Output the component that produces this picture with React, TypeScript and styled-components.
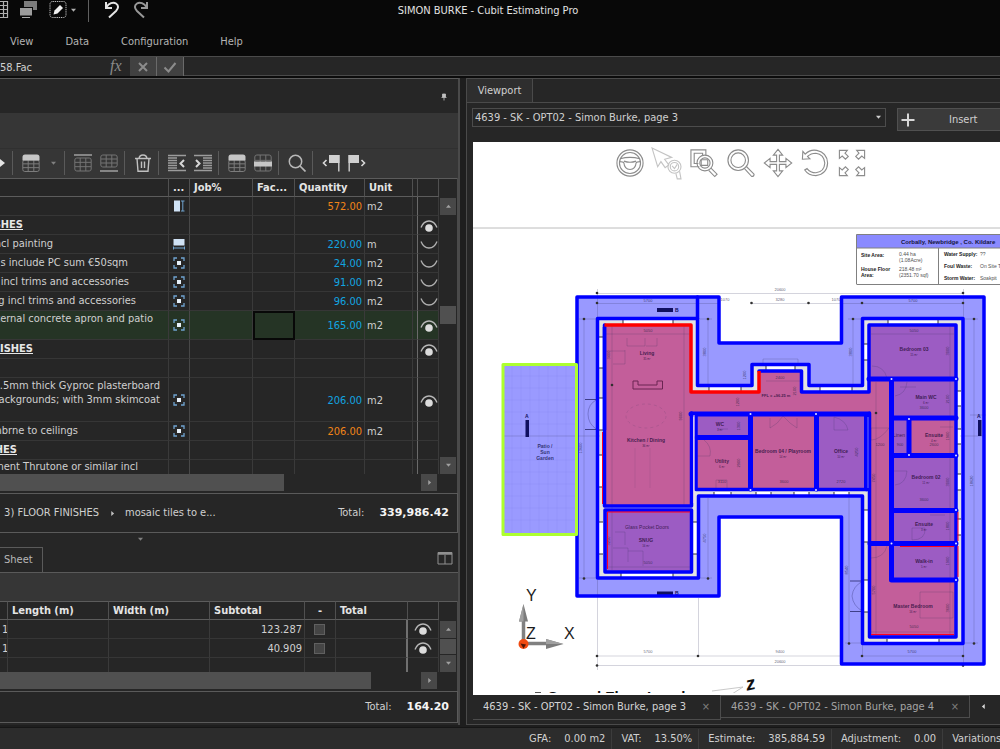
import React from "react";
import styled, { createGlobalStyle, css } from "styled-components";

const Global = createGlobalStyle`
  * { box-sizing: border-box; }
  body { margin: 0; background: #262626; overflow: hidden; }
  body, button, input, select, table {
    font-family: "DejaVu Sans Condensed", "DejaVu Sans", sans-serif;
    font-size: 11px;
    line-height: 14px;
    color: #d0d0d0;
  }
  button { background: none; border: 0; padding: 0; margin: 0; }
  svg { display: block; flex: none; }
`;

/* ---------- frame ---------- */
const Page = styled.div`
  min-height: 100vh;
  display: flex;
  flex-direction: column;
  background: #262626;
  overflow: hidden;
`;
const TitleBar = styled.header`
  display: grid;
  grid-template-columns: 1fr auto 1fr;
  height: 28px;
  padding-right: 24px;
  background: #080808;
`;
const QuickBar = styled.div`
  display: flex;
  align-items: flex-start;
`;
const QuickButton = styled.button<{ $w: number }>`
  display: grid;
  place-items: center;
  width: ${(p) => p.$w}px;
  height: 20px;
`;
const QuickDivider = styled.span`
  width: 1px;
  height: 22px;
  margin: 0 13px 0 12px;
  background: #606060;
`;
const Title = styled.h1`
  margin: 0;
  padding-top: 4px;
  font-size: 11px;
  font-weight: 400;
  color: #e2e2e2;
`;
const Menu = styled.nav`
  display: flex;
  gap: 32px;
  height: 28px;
  padding: 7px 10px 0;
  background: #080808;
`;
const MenuItem = styled.button`
  height: 14px;
  color: #b4b4b4;
`;
const FormulaBar = styled.div`
  display: flex;
  height: 22px;
  border-top: 1px solid #4a4a4a;
  border-bottom: 2px solid #0c0c0c;
`;
const CellName = styled.span`
  width: 105px;
  padding-top: 4px;
`;
const Fx = styled.em`
  width: 25px;
  padding-left: 5px;
  font: italic 16px/18px "Liberation Serif", serif;
  color: #8a8a8a;
`;
const FormulaButton = styled.button`
  display: grid;
  place-items: center;
  width: 27px;
  background: #414141;
  border-right: 1px solid #6a6a6a;
`;
const FormulaInput = styled.input`
  flex: 1;
  min-width: 0;
  border: 0;
  background: #262626;
  border-bottom: 1px solid #4a4a4a;
`;
const Main = styled.main`
  flex: 1;
  display: grid;
  grid-template-columns: 46% 1fr;
  column-gap: 6px;
  background: #1e1e1e;
`;

/* ---------- left side ---------- */
const Left = styled.section`
  display: flex;
  flex-direction: column;
  min-width: 0;
  margin-bottom: 2px;
  background: #262626;
  border-top: 1px solid #5a5a5a;
  border-right: 2px solid #4a4a4a;
`;
const PanelTop = styled.div`
  display: flex;
  justify-content: flex-end;
  align-items: flex-start;
  height: 34px;
  padding: 14px 10px 0 0;
`;
const Band = styled.div<{ $h: number }>`
  height: ${(p) => p.$h}px;
  background: #363636;
`;
const Toolbar = styled.div`
  display: flex;
  align-items: center;
  height: 30px;
  padding-bottom: 1px;
  background: #363636;
  border-top: 1px solid #303030;
`;
const ToolButton = styled.button<{ $w?: number }>`
  display: grid;
  place-items: center;
  width: ${(p) => p.$w ?? 26}px;
  height: 26px;
`;
const Separator = styled.span`
  width: 1px;
  height: 24px;
  margin: 0 5px 0 2px;
  background: #5a5a5a;
`;
const GridArea = styled.div`
  display: flex;
  border-right: 1px solid #4a4a4a;
`;
const Table = styled.table`
  flex: 1;
  width: 0;
  table-layout: fixed;
  border-collapse: separate;
  border-spacing: 0;
`;
const Row = styled.tr<{ $h?: number; $selected?: boolean }>`
  height: ${(p) => p.$h ?? 19}px;
  background: ${(p) => (p.$selected ? "#253425" : "transparent")};
`;
const Head = styled.th<{ $center?: boolean }>`
  height: 19px;
  padding: ${(p) => (p.$center ? "0" : "0 0 0 4px")};
  overflow: hidden;
  white-space: nowrap;
  text-align: ${(p) => (p.$center ? "center" : "left")};
  font-weight: 700;
  color: #e4e4e4;
  border-top: 1px solid #5c5c5c;
  border-right: 1px solid #505050;
  border-bottom: 1px solid #5c5c5c;
`;
const Cell = styled.td<{ $tone?: string; $num?: boolean; $edge?: string; $thick?: boolean; $focus?: boolean; $last?: boolean }>`
  padding: 2px 2px 0;
  overflow: hidden;
  white-space: nowrap;
  color: ${(p) => p.$tone ?? "#d0d0d0"};
  text-align: ${(p) => (p.$num ? "right" : "left")};
  border-right: ${(p) => (p.$thick ? 2 : 1)}px solid ${(p) => p.$edge ?? "#3a3a3a"};
  border-bottom: ${(p) => (p.$last ? "0" : "1px solid #363636")};
  ${(p) =>
    p.$focus &&
    css`
      outline: 2px solid #080808;
      outline-offset: -2px;
    `}
  > svg, > button, > input { margin: 0 auto; display: block; }
`;
const IconCell = styled(Cell)`
  padding: 0 1px 0 0;
`;
const DescCell = styled(Cell)<{ $top?: boolean }>`
  padding: ${(p) => (p.$top ? "1px 0 0" : "0")};
  vertical-align: ${(p) => (p.$top ? "top" : "middle")};
`;
const Desc = styled.span<{ $end: number; $heading?: boolean }>`
  display: flex;
  justify-content: flex-end;
  width: ${(p) => p.$end}px;
  ${(p) =>
    p.$heading &&
    css`
      font-weight: 700;
      text-decoration: underline;
      color: #e6e6e6;
    `}
`;
const VScroll = styled.div`
  display: flex;
  flex-direction: column;
  align-items: center;
  width: 18px;
`;
const ScrollHead = styled.div`
  width: 100%;
  height: 19px;
  border-top: 1px solid #5c5c5c;
`;
const ScrollTrack = styled.div`
  flex: 1;
  width: 16px;
  display: flex;
  flex-direction: column;
  padding-top: 1px;
`;
const ScrollButton = styled.button`
  display: grid;
  place-items: center;
  flex: none;
  width: 16px;
  height: 17px;
  background: #484848;
`;
const VThumb = styled.div<{ $before: string; $size: string }>`
  flex: 0 0 ${(p) => p.$size};
  margin-top: ${(p) => p.$before};
  background: #505050;
`;
const Spring = styled.span`
  flex: 1;
`;
const HScroll = styled.div`
  display: flex;
  height: 19px;
  padding: 0 20px 2px 0;
  border-right: 1px solid #4a4a4a;
`;
const HThumb = styled.div<{ $w: string }>`
  width: ${(p) => p.$w};
  background: #505050;
`;
const Summary = styled.div<{ $h: number }>`
  display: flex;
  align-items: center;
  height: ${(p) => p.$h}px;
  padding-right: 8px;
  border: solid #5a5a5a;
  border-width: 1px 1px 1px 0;
`;
const Crumb = styled.button<{ $end?: number }>`
  display: flex;
  justify-content: flex-end;
  white-space: nowrap;
  width: ${(p) => (p.$end ? p.$end + "px" : "auto")};
`;
const CrumbArrow = styled.span`
  display: grid;
  place-items: center;
  width: 26px;
`;
const TotalValue = styled.strong`
  padding-left: 15px;
  font-family: "DejaVu Sans", sans-serif;
  color: #f4f4f4;
`;
const Splitter = styled.div`
  display: flex;
  height: 14px;
  padding: 4px 0 0 138px;
`;
const SheetTabs = styled.div`
  display: flex;
  justify-content: space-between;
  height: 26px;
  padding-right: 4px;
  border-bottom: 1px solid #5a5a5a;
`;
const SheetTab = styled.button`
  width: 43px;
  text-align: left;
  padding-left: 4px;
  color: #b8b8b8;
  border-top: 1px solid #5a5a5a;
  border-right: 1px solid #5a5a5a;
`;
const LayoutButton = styled.button`
  display: grid;
  place-items: center;
  width: 18px;
  height: 22px;
`;
const Tick = styled.input`
  appearance: none;
  width: 11px;
  height: 11px;
  background: #454545;
  border: 1px solid #606060;
`;

/* ---------- right side ---------- */
const Right = styled.section`
  display: flex;
  flex-direction: column;
  min-width: 0;
  margin-bottom: 2px;
  background: #262626;
  border: solid #4a4a4a;
  border-width: 1px 0 1px 1px;
`;
const ViewTabs = styled.div`
  display: flex;
  height: 24px;
  border-bottom: 1px solid #4a4a4a;
`;
const ViewTab = styled.button`
  width: 66px;
  background: #2e2e2e;
  border-right: 1px solid #4a4a4a;
`;
const ViewBar = styled.div`
  display: flex;
  gap: 11px;
  height: 39px;
  padding: 5px 0 0 5px;
`;
const SelectWrap = styled.label`
  position: relative;
  flex: 1;
  height: 19px;
`;
const Select = styled.select`
  appearance: none;
  width: 100%;
  height: 19px;
  padding: 0 2px;
  background: #262626;
  border: 1px solid #4c4c4c;
  border-radius: 0;
`;
const SelectCaret = styled.span`
  position: absolute;
  right: 5px;
  top: 7px;
  pointer-events: none;
`;
const InsertButton = styled.button`
  display: flex;
  align-items: center;
  gap: 34px;
  width: 103px;
  height: 23px;
  padding-left: 3px;
  background: #3a3a3a;
  border: solid #505050;
  border-width: 1px 0 1px 1px;
`;
const Canvas = styled.div`
  position: relative;
  flex: 1;
  margin-left: 6px;
  background: #fff;
  overflow: hidden;
`;
const Plan = styled.svg`
  width: 100%;
  height: auto;
`;
const NavTools = styled.div`
  position: absolute;
  inset: 3px 0 auto 9px;
  display: flex;
  justify-content: center;
`;
const NavButton = styled.button`
  display: grid;
  place-items: center;
  width: 37px;
  height: 36px;
`;
const PageTabs = styled.div`
  display: flex;
  height: 29px;
  padding-left: 6px;
  overflow: hidden;
`;
const PageTab = styled.button<{ $active?: boolean }>`
  display: flex;
  align-items: center;
  justify-content: space-between;
  flex: none;
  width: ${(p) => (p.$active ? 248 : 249)}px;
  height: ${(p) => (p.$active ? 25 : 23)}px;
  padding: 0 10px;
  white-space: nowrap;
  color: ${(p) => (p.$active ? "#d4d4d4" : "#a4a4a4")};
  border: solid #4c4c4c;
  border-width: ${(p) => (p.$active ? "0 1px 1px 0" : "1px 1px 1px 0")};
`;
const TabClose = styled.span`
  color: #808080;
`;
const TabNext = styled.button`
  display: grid;
  place-items: center;
  width: 26px;
  height: 23px;
`;
const Status = styled.footer`
  display: flex;
  align-items: center;
  height: 22px;
  padding-left: 52%;
  background: #2c2c2c;
  border-top: 1px solid #161616;
  overflow: hidden;
`;
const StatusItem = styled.span`
  display: flex;
  flex: none;
  gap: 13px;
  padding: 0 6px 0 9px;
  height: 20px;
  align-items: center;
  border-right: 1px solid #3c3c3c;
`;

/* ---------- small drawings ---------- */
const Caret = ({ dir = "down", color = "#a0a0a0", size = 5 }: { dir?: string; color?: string; size?: number }) => {
  const d: Record<string, string> = {
    down: "M0 1H6L3 4.5Z",
    up: "M0 4.5H6L3 1Z",
    right: "M1.5 0V6L5 3Z",
    left: "M4.5 0V6L1 3Z",
  };
  return (
    <svg width={size} height={size} viewBox="0 0 6 6">
      <path d={d[dir]} fill={color} />
    </svg>
  );
};
const I = ({ w = 18, h = 18, children }: { w?: number; h?: number; children: React.ReactNode }) => (
  <svg width={w} height={h} viewBox={`0 0 ${w} ${h}`} fill="none">
    {children}
  </svg>
);
const GridBody = ({ y = 6, h = 11.5, c = "#7c7c7c" }) => (
  <g stroke={c}>
    <rect x=".8" y={y} width="16.4" height={h} rx="2" />
    <path d={`M6.2 ${y}v${h}M11.8 ${y}v${h}M1 ${y + h / 3}h16M1 ${y + (2 * h) / 3}h16`} />
  </g>
);
const HeadTable = () => (
  <I>
    <GridBody />
    <path d="M.5 6.5V3q0-2.5 2.5-2.5h12q2.500 0 2.500 2.500v3.500z" fill="#c6c6c6" />
  </I>
);
const RowAbove = () => (
  <I>
    <path d="M0 1h18" stroke="#a8a8a8" strokeWidth="1.400" />
    <GridBody y={4} h={13} c="#747474" />
  </I>
);
const RowBelow = () => (
  <I>
    <GridBody y={1} h={12} c="#747474" />
    <path d="M0 17h18" stroke="#a8a8a8" strokeWidth="1.400" />
  </I>
);
const RowMid = () => (
  <I>
    <GridBody y={1} h={16} c="#747474" />
    <rect y="7.500" width="18" height="5" fill="#c6c6c6" />
  </I>
);
const Trash = () => (
  <I>
    <g stroke="#c0c0c0" strokeWidth="1.400">
      <path d="M1 4.500h16M3 4.500l1 12.800h10l1-12.800M5 4.500Q5.500 1 9 1t4 3.500M7.500 7.500v6.500M10.500 7.500v6.500" />
    </g>
  </I>
);
const Outdent = () => (
  <I>
    <path d="M0 1.500h18M0 4h9M0 6.500h9M0 9h9M0 11.500h9M0 14h9M0 16.500h18" stroke="#9c9c9c" strokeWidth="1.300" />
    <path d="M16 6l-3.500 3.500L16 13" stroke="#d8d8d8" strokeWidth="2" />
  </I>
);
const Indent = () => (
  <I>
    <path d="M0 1.500h18M9 4h9M9 6.500h9M9 9h9M9 11.500h9M9 14h9M0 16.500h18" stroke="#9c9c9c" strokeWidth="1.300" />
    <path d="M2 6l3.500 3.500L2 13" stroke="#d8d8d8" strokeWidth="2" />
  </I>
);
const Search = () => (
  <I>
    <circle cx="7.500" cy="7.500" r="6.200" stroke="#b8b8b8" strokeWidth="1.500" />
    <path d="M12 12l5.500 5.500" stroke="#b8b8b8" strokeWidth="1.700" />
  </I>
);
const FlagPrev = () => (
  <I>
    <path d="M7 1h10.500v8h-10.500z" fill="#d0d0d0" />
    <path d="M16.800 1v16.500" stroke="#d0d0d0" strokeWidth="1.400" />
    <path d="M4.500 6L1.500 9l3 3" stroke="#d8d8d8" strokeWidth="1.600" />
  </I>
);
const FlagNext = () => (
  <I>
    <path d="M.5 1h10.500v8h-10.500z" fill="#d0d0d0" />
    <path d="M1.200 1v16.500" stroke="#d0d0d0" strokeWidth="1.400" />
    <path d="M13.500 6l3 3-3 3" stroke="#d8d8d8" strokeWidth="1.600" />
  </I>
);
const QuickIcons = () => (
  <>
    <QuickButton $w={12} aria-label="Worksheet">
      <I w={12} h={20}>
        <path d="M-2 1.500H7.500V17.500H-2M3.500 1.500V17.500M0 5.500H7.500M0 9.500H7.500M0 13.500H7.500" stroke="#b0b0b0" strokeWidth="1.200" />
      </I>
    </QuickButton>
    <QuickButton $w={34} aria-label="Windows">
      <I w={20} h={20}>
        <rect x="5" y="1" width="13" height="9" fill="#7c7c7c" />
        <rect x=".5" y="7.500" width="13" height="8.500" fill="#9c9c9c" stroke="#080808" />
        <path d="M3 17.500h8" stroke="#aaa" />
      </I>
    </QuickButton>
    <QuickButton $w={24} aria-label="Edit">
      <I w={18} h={20}>
        <rect x="1" y="1.500" width="16" height="16" rx="2.500" stroke="#b8b8b8" strokeDasharray="1.400 .8" />
        <path d="M4.500 14.500l1-4L11 5l3 3L8.500 13.500z" fill="#f0f0f0" />
      </I>
    </QuickButton>
    <QuickButton $w={6} aria-label="Edit options">
      <Caret color="#b0b0b0" />
    </QuickButton>
    <QuickDivider />
    <QuickButton $w={20} aria-label="Undo">
      <I w={16} h={20}>
        <path d="M2 2v6h6M2.500 7C5 3.500 9 1.500 12 3.500c3 2 2.500 5 0 7.500L5 17.500" stroke="#e4e4e4" strokeWidth="2" />
      </I>
    </QuickButton>
    <QuickButton $w={38} aria-label="Redo">
      <I w={16} h={20}>
        <path d="M14 2v6H8M13.500 7C11 3.500 7 1.500 4 3.500c-3 2-2.500 5 0 7.500l7 6.500" stroke="#989898" strokeWidth="2" />
      </I>
    </QuickButton>
  </>
);

const AreaMark = () => (
  <I w={12} h={12}>
    <path d="M1 4V1h3M8 1h3v3M11 8v3H8M4 11H1V8" stroke="#6fa3cf" strokeWidth="1.300" />
    <rect x="4" y="4" width="4" height="4" fill="#e6f0fa" />
  </I>
);
const HeightMark = () => (
  <I w={12} h={12}>
    <rect x="1" y=".5" width="6" height="11" fill="#cfe2f5" />
    <path d="M8 1h3.500M8 11h3.500M9.800 1v10" stroke="#6fa3cf" />
  </I>
);
const LengthMark = () => (
  <I w={12} h={12}>
    <rect x=".5" y="1" width="11" height="6.500" fill="#cfe2f5" />
    <path d="M.5 8.500v3M11.500 8.500v3M.5 10h11" stroke="#6fa3cf" />
  </I>
);
const EyeOpen = () => (
  <I w={18} h={12}>
    <path d="M1 7.500C3 2.500 6 1 9 1s6 1.500 8 6.500" stroke="#b8b8b8" strokeWidth="1.300" />
    <circle cx="9" cy="8" r="3.800" fill="#dcdcdc" />
  </I>
);
const EyeShut = () => (
  <I w={18} h={12}>
    <path d="M1 2.500C3 7.500 6 9 9 9s6-1.500 8-6.500" stroke="#b0b0b0" strokeWidth="1.300" />
  </I>
);

/* ---------- data ---------- */
type Item = {
  desc: string[];
  end: number;
  heading?: boolean;
  mark?: "area" | "height" | "length";
  qty?: string;
  unit?: string;
  warm?: boolean;
  eye?: "open" | "shut";
  h?: number;
  selected?: boolean;
};
const items: Item[] = [
  { desc: [], end: 0, mark: "height", qty: "572.00", unit: "m2", warm: true },
  { desc: ["SHES"], end: 23, heading: true, eye: "open" },
  { desc: ["ncl painting"], end: 53, mark: "length", qty: "220.00", unit: "m", eye: "shut" },
  { desc: ["s include PC sum €50sqm"], end: 128, mark: "area", qty: "24.00", unit: "m2", eye: "shut" },
  { desc: ["incl trims and accessories"], end: 129, mark: "area", qty: "91.00", unit: "m2", eye: "shut" },
  { desc: ["ng incl trims and accessories"], end: 136, mark: "area", qty: "96.00", unit: "m2", eye: "shut" },
  { desc: ["ternal concrete apron and patio"], end: 153, mark: "area", qty: "165.00", unit: "m2", eye: "open", h: 29, selected: true },
  { desc: ["ISHES"], end: 33, heading: true, eye: "open" },
  { desc: [], end: 0 },
  { desc: [".5mm thick Gyproc plasterboard", "ackgrounds; with 3mm skimcoat"], end: 160, mark: "area", qty: "206.00", unit: "m2", eye: "open", h: 44 },
  { desc: ["nbrne to ceilings"], end: 78, mark: "area", qty: "206.00", unit: "m2", warm: true },
  { desc: ["HES"], end: 17, heading: true },
  { desc: ["nent Thrutone or similar incl"], end: 138, h: 14 },
];
const marks = { area: <AreaMark />, height: <HeightMark />, length: <LengthMark /> };

/* ---------- floor plan ---------- */
const apron =
  "M577 297H719V343H841.500V297H984V664H841.500V517H719V596H577Z";
const shell =
  "M597.500 318.500H697.500V385.500H752V364.500H809V385.500H862.500V318.500H963V643.500H862.500V496H698.500V578H597.500Z";
const floor =
  "M604.500 325H691V392H759V371H801.500V392H869V325H956V637H869V413H691.500V506H604.500Z";
const pink = "#c35e9a";
const violet = "#9c5cc3";
const rooms: [number, number, number, number, string][] = [
  [869, 325, 87, 53, violet],
  [893, 380, 63, 37, violet],
  [893, 419, 15, 35, violet],
  [909, 419, 47, 35, pink],
  [893, 456, 63, 54, violet],
  [893, 511, 63, 32, violet],
  [893, 545, 63, 34, violet],
  [697, 415, 53, 21, violet],
  [696, 439, 54, 51, pink],
  [751, 415, 65, 74, pink],
  [817, 415, 48, 74, violet],
];
const walls = [
  "M691 414H868", "M750.500 414V489", "M816.500 414V489", "M697 437.500H750", "M866.500 414V489",
  "M869 379H956", "M891.500 379V580H956", "M891.500 418H956", "M909 418V455", "M891.500 455.500H956",
  "M891.500 510.500H956", "M870 543.500H956",
];
const windows: [number, number, number, number][] = [
  [623, 320, 50, 4], [888, 320, 50, 4], [709, 387, 32, 4], [820, 387, 32, 4], [766, 366, 29, 4],
  [599, 337, 4, 31], [599, 398, 4, 32], [599, 455, 4, 32], [599, 522, 4, 32], [693, 522, 4, 32],
  [621, 573, 52, 4], [714, 492, 17, 3], [756, 492, 15, 3], [794, 492, 15, 3], [834, 492, 15, 3],
  [864, 344, 4, 16], [957, 391, 4, 15], [957, 429, 4, 15], [957, 474, 4, 16], [957, 519, 4, 16],
  [864, 510, 4, 32], [864, 580, 4, 32], [887, 639, 52, 3],
];
const roomNames: [number, number, string, string][] = [
  [647, 355, "Living", "35 m²"],
  [646, 442, "Kitchen / Dining", "36 m²"],
  [646, 542, "SNUG", "16 m²"],
  [914, 351, "Bedroom 03", "15 m²"],
  [926, 399, "Main WC", "6 m²"],
  [934, 437, "Ensuite", "4 m²"],
  [926, 479, "Bedroom 02", "11 m²"],
  [924, 526, "Ensuite", "3 m²"],
  [924, 563, "Walk-in", "5 m²"],
  [913, 608, "Master Bedroom", "16 m²"],
  [720, 426, "WC", "3 m²"],
  [722, 463, "Utility", "6 m²"],
  [783, 453, "Bedroom 04 / Playroom", "14 m²"],
  [841, 453, "Office", "10 m²"],
];
const dims: [number, number, string, boolean?][] = [
  [780, 291, "20600"], [780, 301, "3280"], [725, 301, "1070"], [836, 301, "1070"], [648, 302, "5700"], [913, 302, "5700"],
  [648, 332, "5050"], [914, 332, "5050"], [780, 379, "2400"], [648, 564, "5050"], [648, 653, "5700"], [780, 653, "9400"],
  [780, 663, "20600"], [912, 653, "5700"], [914, 628, "5050"], [722, 483, "3110"], [784, 483, "3600"], [841, 483, "2720"],
  [924, 409, "3600"], [924, 501, "3600"], [900, 446, "900"], [934, 446, "2600"], [880, 446, "1200"],
  [706, 352, "3800", true], [852, 352, "3800", true], [610, 355, "3400", true], [682, 416, "9000", true], [746, 375, "1200", true],
  [796, 391, "2100", true], [739, 402, "1200", true], [949, 351, "3000", true], [949, 399, "2100", true], [949, 436, "1900", true],
  [949, 482, "3000", true], [949, 526, "1800", true], [949, 561, "1900", true], [949, 608, "3600", true], [740, 463, "2900", true],
  [858, 452, "4250", true], [706, 538, "4750", true], [848, 570, "8540", true], [610, 541, "3250", true], [582, 448, "13600", true],
  [973, 481, "18620", true], [875, 478, "7450", true], [875, 590, "5700", true], [740, 426, "1300", true],
];
const dots: [number, number][] = [
  [597, 293], [963, 293], [597, 303], [751.5, 303], [808.5, 303], [862, 303], [963, 303], [584, 319], [708, 319],
  [853, 319], [974, 319], [584, 578.5], [708, 578.5], [849, 643.5], [974, 643.5], [597, 656], [698, 656], [862, 656],
  [963, 656], [597, 665.5], [963, 665.5], [612, 385], [876, 413],
];
const joints: [number, number][] = [
  [750.5, 414], [816, 414], [891.5, 379], [956, 379], [909, 419], [956, 455.5], [909, 455], [956, 510],
  [891.5, 543.5], [956, 543.5], [956, 580], [750.5, 490], [816, 490],
];

const FloorPlan = () => (
  <Plan viewBox="473 142 527 551" fontFamily='"Liberation Sans", sans-serif' fill="none">
    <rect x="473" y="142" width="527" height="552" fill="#fff" />
    <path d="M473 228H1000" stroke="#bcbcbc" />

    <rect x="856.500" y="234.500" width="160" height="13.500" fill="#8a8aff" />
    <path d="M856.500 284V234.500H1000M856.500 248H1000M856.500 284.500H1000M938.500 248V284" stroke="#808080" />
    <g fill="#222" fontSize="5">
      <text x="901" y="244" fontSize="6" fontWeight="700" fill="#141440">Corbally, Newbridge , Co. Kildare</text>
      <g fontWeight="700">
        <text x="861" y="257">Site Area:</text>
        <text x="861" y="271">House Floor</text>
        <text x="861" y="277">Area:</text>
        <text x="944" y="256">Water Supply:</text>
        <text x="944" y="268">Foul Waste:</text>
        <text x="944" y="280">Storm Water:</text>
      </g>
      <g fill="#505050">
        <text x="899" y="256">0.44 ha</text>
        <text x="899" y="262">(1.08Acre)</text>
        <text x="899" y="271">218.48 m²</text>
        <text x="899" y="277">(2351.70 sqf)</text>
        <text x="980" y="256">??</text>
        <text x="980" y="268">On Site T</text>
        <text x="980" y="280">Soakpit</text>
      </g>
    </g>

    <path d={apron} fill="#9999ff" />
    <path d={shell} fill="#e2e2e2" />
    {windows.map(([x, y, w, h], i) => (
      <g key={i}>
        <rect x={x} y={y} width={w} height={h} fill="#fff" />
        <path d={w > h ? `M${x} ${y}v${h}M${x + w} ${y}v${h}` : `M${x} ${y}h${w}M${x} ${y + h}h${w}`} stroke="#333" />
      </g>
    ))}
    <path d={floor} fill={pink} />
    <rect x="605" y="510" width="87" height="61" fill={violet} />
    {rooms.map(([x, y, w, h, fill], i) => (
      <rect key={i} x={x} y={y} width={w} height={h} fill={fill} />
    ))}
    <rect x="503" y="364.500" width="73.500" height="170" fill="#9a9aff" />
    <path
      d="M512 366V533M521 366V533M530 366V533M539 366V533M548 366V533M557 366V533M566 366V533M504 376H576M504 388H576M504 400H576M504 412H576M504 424H576M504 448H576M504 460H576M504 472H576M504 484H576M504 496H576M504 508H576M504 520H576"
      stroke="#8e8ef4" strokeWidth=".5"
    />

    {/* dimension lines and fittings */}
    <g stroke="#30305a" strokeOpacity=".3" strokeWidth=".7">
      <path d="M597 293.500H963M597 303.500H720M751 303.500H963M597.500 289V318M963.500 289V318M597.500 580V670M698.500 598V656M862.500 645V656M963.500 645V667M597 656H841M597 665.500H841M862 656H963" />
      <path d="M584 319V578M708 319V385M853 319V385M974 319V643M708 498V578M849 496V643M579 319H600M700 319H712M848 319H862M963 319H978M579 578H597M698 578H712M845 643H862M963 643H978" />
      <path d="M605 334H690M871 334H954M605 567H690M871 632H954M612 326V570M876 382V636M684 326V505M950 327V635M766 381H800M763 359H798V364M763 359V364" />
      <path d="M613 364H625V350M627 338V346H645V338M646 346H657V338M606 351H625M502 436H600M770 428V418M797 428V418M770 428Q778 424 783 416Q790 424 797 428M834 430V417Q846 420 848 430H834M872 366Q884 366 887 378M895 396Q906 394 907 382M871 428H889M871 428V440Q880 440 889 428M893 471H907Q906 484 895 485M912 540V528H925Q926 540 912 540M871 558Q884 558 887 546M697 456H710Q712 446 704 440" />
      <ellipse cx="646" cy="416" rx="20" ry="12" strokeDasharray="3 3" strokeOpacity=".2" />
      <path d="M635 448V488M650 448V488" strokeOpacity=".15" />
      <path d="M613 548H628V562M628 551H643V566M615 532H625V545M716 488V480H727V488M920 592H953V618H920Z" />
      <path d="M970 415H986M960 436H984M718 429H728M900 387H916M930 515H945M940 427H953" />
    </g>
    <g stroke="#28286a" strokeWidth=".8">
      <path d="M585 399.500H597M585 429.500H597M850 581H863M850 611.500H863" />
      <path d="M597 399.500Q588 404 588 414Q588 424 597 429.500M863 581Q853 586 852 596Q853 606 863 611.500" strokeOpacity=".4" />
    </g>
    <path d="M633 381V389H662.500V381H657V385H638V381Z" stroke="#6a2452" />
    <g fill="#101060">
      <rect x="657" y="308" width="16" height="4" />
      <rect x="657" y="591.500" width="16" height="3.500" />
      <rect x="525.500" y="420" width="3.500" height="17" />
      <rect x="978" y="420" width="3.500" height="16" />
      <g fontSize="5" fontWeight="700">
        <text x="675" y="312">B</text>
        <text x="675" y="595">B</text>
        <text x="525" y="418">A</text>
        <text x="977" y="418">A</text>
      </g>
    </g>
    <g fill="#303030">
      {dots.map(([x, y], i) => (
        <circle key={i} cx={x} cy={y} r="1.300" />
      ))}
    </g>
    <g textAnchor="middle" fontSize="4" fill="#20203c" fillOpacity=".75">
      {dims.map(([x, y, t, vertical], i) => (
        <text key={i} x={x} y={y} transform={vertical ? `rotate(-90 ${x} ${y})` : undefined}>{t}</text>
      ))}
    </g>
    <g textAnchor="middle" fontSize="5" fill="#2e1040" fillOpacity=".85">
      {roomNames.map(([x, y, name, size], i) => (
        <g key={i}>
          <text x={x} y={y} fontWeight="700">{name}</text>
          <text x={x} y={y + 5} fontSize="3">{size}</text>
        </g>
      ))}
      <text x="899" y="437">Linen</text>
      <text x="647" y="529">Glass Pocket Doors</text>
      <text x="776" y="397" fontSize="4" fontWeight="700">FFL = +96.25 m</text>
      <g fontWeight="700" fill="#1c1c5a">
        <text x="545" y="448">Patio /</text>
        <text x="545" y="454">Sun</text>
        <text x="545" y="460">Garden</text>
      </g>
    </g>

    {/* measured outlines */}
    <g stroke="#0000ff" strokeWidth="3.500" strokeLinejoin="round" strokeLinecap="round">
      <path d={apron} />
      <path d={shell} />
      <path d="M697.500 297V318.500" />
      <path d="M759 371H801.500V392H869V325H956V637H869.500V413M691.500 413V506H604.500V325" />
      <path d="M605 510H691.500V572H605Z" />
      <path d="M696 415V489.500H865" />
      <path d={walls.join("")} strokeWidth="5" />
    </g>
    <path d="M868 417V488" stroke="#8c8cf0" strokeWidth=".8" />
    <path d="M694 415V503" stroke="#f4d8ee" strokeWidth="1" />
    <path d="M607.500 569V512H690M602.500 432V504M958 512V541M958 546V577M900 546.500H954M871 634.500H954" stroke="#ff0020" />
    <path d="M604.500 325H691V392H759V371" stroke="#ff0000" strokeWidth="3.500" strokeLinejoin="round" />
    <path d="M604.500 327V430" stroke="#0000ff" strokeWidth="3.500" />
    <g fill="#e8e8ff">
      {joints.map(([x, y], i) => (
        <circle key={i} cx={x} cy={y} r="1" />
      ))}
    </g>
    <rect x="503" y="364.500" width="73.500" height="170" stroke="#adff2f" strokeWidth="3" strokeLinejoin="round" />

    {/* axis marker */}
    <path d="M523.500 643V618M523.500 643.500H548" stroke="#808080" strokeWidth="3.500" />
    <path d="M523.500 604L528 621.500H519ZM563.500 644L546 639V649Z" fill="#7c7c7c" />
    <path d="M523.500 604V621.500H519ZM563.500 644H546V639Z" fill="#a0a0a0" />
    <circle cx="523.500" cy="644" r="5" fill="#f04a10" />
    <path d="M520.500 643.500L526 644.500L523.500 648.500Z" fill="#501808" />
    <g fill="#1c1c1c" fontSize="16">
      <text x="526" y="601">Y</text>
      <text x="526" y="639">Z</text>
      <text x="564" y="639">X</text>
    </g>
    <path d="M712 691L743 687L732 694" stroke="#bbb" strokeWidth=".8" />
    <text x="746" y="690" fontSize="19" fontWeight="700" fontStyle="italic" fill="#111" transform="rotate(-12 750 686)">z</text>
    <text x="547" y="702" fontSize="15" fontWeight="700" fill="#111">Ground Floor Level</text>
    <path d="M535 692.500H541" stroke="#555" />
  </Plan>
);

/* ---------- viewport navigation icons ---------- */
const nav: [string, React.ReactNode][] = [
  ["Orbit", <g key="0">
    <circle cx="15" cy="15" r="14" /><circle cx="15" cy="15" r="11.300" />
    <path d="M4.500 10.500Q15 7.500 25.500 10.500M4 13.500Q8 13.500 8.500 15Q9 21.500 15 22Q21 21.500 21.500 15Q22 13.500 26 13.500M8.500 13Q15 15.500 21.500 13" />
  </g>],
  ["Select", <g key="1" stroke="#c4c4c4">
    <path d="M-1 -1L20 9L12.500 11L17 17L13 20L8.500 13.500L5 19Z" />
    <circle cx="23" cy="19" r="7" /><circle cx="23" cy="19" r="4.500" /><path d="M20.500 18l2.500 3 3-4.500M24.500 26l1.500 6h4l-1.500-8" />
  </g>],
  ["Zoom window", <g key="2">
    <path d="M10 19H1V1H17V7M9 15.500H4.500V4.500H13.500V7" />
    <circle cx="16" cy="15" r="8.500" /><circle cx="16" cy="15" r="5.500" /><path d="M12 11.500h7v6h-7zM22.500 20.500l6.500 6.500-2.500 2.500-6.500-6.500" />
  </g>],
  ["Zoom", <g key="3">
    <circle cx="12" cy="12" r="11" /><circle cx="12" cy="12" r="7.800" /><path d="M20.500 18.500L29 27q0 2.500-2.500 2.500L18.500 20.800" />
  </g>],
  ["Pan", <g key="4">
    <path d="M15 .3L20 6.500H16.500V13.500H23.500V10L29.700 15L23.500 20V16.500H16.500V23.500H20L15 29.700L10 23.500H13.500V16.500H6.500V20L.3 15L6.500 10V13.500H13.500V6.500H10Z" />
  </g>],
  ["Rotate", <g key="5">
    <path d="M2 2.500L4.500 5.500Q10 0 17 1.500Q28 4 28.500 15Q28 27 16 28.500Q8 28.500 4 22.500L6.500 21Q10 25.500 16 25.500Q25 24.500 25.500 15Q24.500 5.500 16 4.500Q10.500 4.500 7 8L9.500 10.500L1.500 11Z" />
  </g>],
  ["Zoom to fit", <g key="6">
    {["", "translate(30 0) scale(-1 1)", "translate(0 30) scale(1 -1)", "translate(30 30) scale(-1 -1)"].map((t) => (
      <path key={t} transform={t} d="M1.500 1.500H10L7.500 4.500L11 8L8 11L4.500 7.500L1.500 10Z" />
    ))}
  </g>],
];

const blank = "";

export default function App() {
  return (
    <Page>
      <Global />
      <TitleBar>
        <QuickBar><QuickIcons /></QuickBar>
        <Title>SIMON BURKE - Cubit Estimating Pro</Title>
      </TitleBar>
      <Menu>
        {["View", "Data", "Configuration", "Help"].map((m) => <MenuItem key={m}>{m}</MenuItem>)}
      </Menu>
      <FormulaBar>
        <CellName>58.Fac</CellName>
        <Fx>fx</Fx>
        <FormulaButton aria-label="Cancel">
          <I w={12} h={12}><path d="M2 2l8 8M10 2l-8 8" stroke="#8c8c8c" strokeWidth="2" /></I>
        </FormulaButton>
        <FormulaButton aria-label="Accept">
          <I w={14} h={12}><path d="M1.500 6.500l4 4 7-8.500" stroke="#8c8c8c" strokeWidth="2" /></I>
        </FormulaButton>
        <FormulaInput aria-label="Formula" />
      </FormulaBar>

      <Main>
        <Left>
          <PanelTop>
            <button aria-label="Pin panel">
              <I w={8} h={8}><path d="M2.500 1h3v3h-3zM1.500 4.500h5M4 4.500v3" fill="#c0c0c0" stroke="#c0c0c0" strokeWidth=".8" /></I>
            </button>
          </PanelTop>
          <Band $h={35} />
          <Toolbar>
            <ToolButton $w={10} aria-label="Next"><I w={10} h={10}><path d="M0 1l5 4-5 4z" fill="#e4e4e4" /></I></ToolButton>
            <Separator />
            <ToolButton aria-label="Insert row"><HeadTable /></ToolButton>
            <ToolButton $w={18} aria-label="Insert row options"><Caret color="#808080" /></ToolButton>
            <Separator />
            <ToolButton aria-label="Row above"><RowAbove /></ToolButton>
            <ToolButton aria-label="Row below"><RowBelow /></ToolButton>
            <Separator />
            <ToolButton aria-label="Delete"><Trash /></ToolButton>
            <Separator />
            <ToolButton aria-label="Outdent"><Outdent /></ToolButton>
            <ToolButton aria-label="Indent"><Indent /></ToolButton>
            <Separator />
            <ToolButton aria-label="Heading row"><HeadTable /></ToolButton>
            <ToolButton aria-label="Item row"><RowMid /></ToolButton>
            <Separator />
            <ToolButton aria-label="Find"><Search /></ToolButton>
            <Separator />
            <ToolButton aria-label="Previous flag"><FlagPrev /></ToolButton>
            <ToolButton aria-label="Next flag"><FlagNext /></ToolButton>
          </Toolbar>

          <GridArea>
            <Table>
              <colgroup>
                <col /><col width={21} /><col width={63} /><col width={42} /><col width={70} /><col width={48} /><col width={5} /><col width={21} />
              </colgroup>
              <thead>
                <Row>
                  <Head /><Head>...</Head><Head>Job%</Head><Head>Fac...</Head><Head>Quantity</Head><Head>Unit</Head><Head /><Head />
                </Row>
              </thead>
              <tbody>
                {items.map((it, i) => {
                  const last = i === items.length - 1;
                  return (
                    <Row key={i} $h={it.h} $selected={it.selected}>
                      <DescCell $last={last} $top={!!it.h && !last}>
                        {it.desc.map((d) => <Desc key={d} $end={it.end} $heading={it.heading}>{d}</Desc>)}
                      </DescCell>
                      <IconCell $last={last} $edge="#484848">{it.mark && marks[it.mark]}</IconCell>
                      <Cell $last={last} />
                      <Cell $last={last} $focus={it.selected} />
                      <Cell $last={last} $num $tone={it.warm ? "#f08418" : "#12a4e0"}>{it.qty}</Cell>
                      <Cell $last={last}>{it.unit}</Cell>
                      <Cell $last={last} $edge="#6a6a6a" />
                      <Cell $last={last}>
                        {it.eye && (
                          <button aria-label="Toggle visibility">{it.eye === "open" ? <EyeOpen /> : <EyeShut />}</button>
                        )}
                      </Cell>
                    </Row>
                  );
                })}
              </tbody>
            </Table>
            <VScroll>
              <ScrollHead />
              <ScrollTrack>
                <ScrollButton aria-label="Scroll up"><Caret dir="up" /></ScrollButton>
                <VThumb $before="91px" $size="18px" />
                <Spring />
                <ScrollButton aria-label="Scroll down"><Caret /></ScrollButton>
              </ScrollTrack>
            </VScroll>
          </GridArea>
          <HScroll>
            <HThumb $w="65%" />
            <Spring />
            <ScrollButton aria-label="Scroll right"><Caret dir="right" /></ScrollButton>
          </HScroll>
          <Summary $h={40}>
            <Crumb $end={99}>3) FLOOR FINISHES</Crumb>
            <CrumbArrow><Caret dir="right" color="#c0c0c0" /></CrumbArrow>
            <Crumb>mosaic tiles to e...</Crumb>
            <Spring />
            <span>Total:</span>
            <TotalValue>339,986.42</TotalValue>
          </Summary>

          <Splitter><Caret color="#808080" /></Splitter>
          <SheetTabs>
            <SheetTab>Sheet</SheetTab>
            <LayoutButton aria-label="Layout">
              <I w={16} h={14}>
                <path d="M1 1.500h14v11.500H1zM8 4v9" stroke="#909090" />
                <path d="M1 2.500h14" stroke="#909090" strokeWidth="2.500" />
              </I>
            </LayoutButton>
          </SheetTabs>
          <Band $h={28} />
          <GridArea>
            <Table>
              <colgroup>
                <col width={8} /><col width={101} /><col /><col width={95} /><col width={31} /><col width={72} /><col width={31} />
              </colgroup>
              <thead>
                <Row>
                  <Head /><Head>Length (m)</Head><Head>Width (m)</Head><Head>Subtotal</Head><Head $center>-</Head><Head>Total</Head><Head />
                </Row>
              </thead>
              <tbody>
                {["123.287", "40.909", blank].map((v, i) => (
                  <Row key={i} $h={v ? 19 : 14}>
                    <Cell $num $last={!v}>{v && "1"}</Cell>
                    <Cell $last={!v} />
                    <Cell $last={!v} />
                    <Cell $num $last={!v}>{v}</Cell>
                    <IconCell $last={!v}>{v && <Tick type="checkbox" aria-label="Deduct" />}</IconCell>
                    <Cell $edge="#707070" $thick $last={!v} />
                    <IconCell $last={!v}>{v && <button aria-label="Toggle visibility"><EyeOpen /></button>}</IconCell>
                  </Row>
                ))}
              </tbody>
            </Table>
            <VScroll>
              <ScrollHead />
              <ScrollTrack>
                <ScrollButton aria-label="Scroll up"><Caret dir="up" /></ScrollButton>
                <VThumb $before="1px" $size="15px" />
                <Spring />
                <ScrollButton aria-label="Scroll down"><Caret /></ScrollButton>
              </ScrollTrack>
            </VScroll>
          </GridArea>
          <HScroll>
            <HThumb $w="85%" />
            <Spring />
            <ScrollButton aria-label="Scroll right"><Caret dir="right" /></ScrollButton>
          </HScroll>
          <Summary $h={32}>
            <Spring />
            <span>Total:</span>
            <TotalValue>164.20</TotalValue>
          </Summary>
        </Left>

        <Right>
          <ViewTabs><ViewTab>Viewport</ViewTab></ViewTabs>
          <ViewBar>
            <SelectWrap>
              <Select aria-label="Drawing" defaultValue="3">
                <option value="3">4639 - SK - OPT02 - Simon Burke, page 3</option>
              </Select>
              <SelectCaret><Caret color="#d0d0d0" /></SelectCaret>
            </SelectWrap>
            <InsertButton>
              <I w={14} h={14}><path d="M7 .5v13M.5 7h13" stroke="#d8d8d8" strokeWidth="2" /></I>
              Insert
            </InsertButton>
          </ViewBar>
          <Canvas>
            <FloorPlan />
            <NavTools>
              {nav.map(([label, art]) => (
                <NavButton key={label} aria-label={label}>
                  <svg width="28" height="28" viewBox="0 0 30 30" fill="none" stroke="#8c8c8c" strokeWidth="1.200" overflow="visible">
                    {art}
                  </svg>
                </NavButton>
              ))}
            </NavTools>
          </Canvas>
          <PageTabs>
            <PageTab $active>4639 - SK - OPT02 - Simon Burke, page 3 <TabClose>×</TabClose></PageTab>
            <PageTab>4639 - SK - OPT02 - Simon Burke, page 4 <TabClose>×</TabClose></PageTab>
            <TabNext aria-label="Next pages"><Caret dir="left" color="#d8d8d8" /></TabNext>
          </PageTabs>
        </Right>
      </Main>

      <Status>
        {[["GFA:", "0.00 m2"], ["VAT:", "13.50%"], ["Estimate:", "385,884.59"], ["Adjustment:", "0.00"], ["Variations:", blank]].map(([k, v]) => (
          <StatusItem key={k}><span>{k}</span><span>{v}</span></StatusItem>
        ))}
      </Status>
    </Page>
  );
}
